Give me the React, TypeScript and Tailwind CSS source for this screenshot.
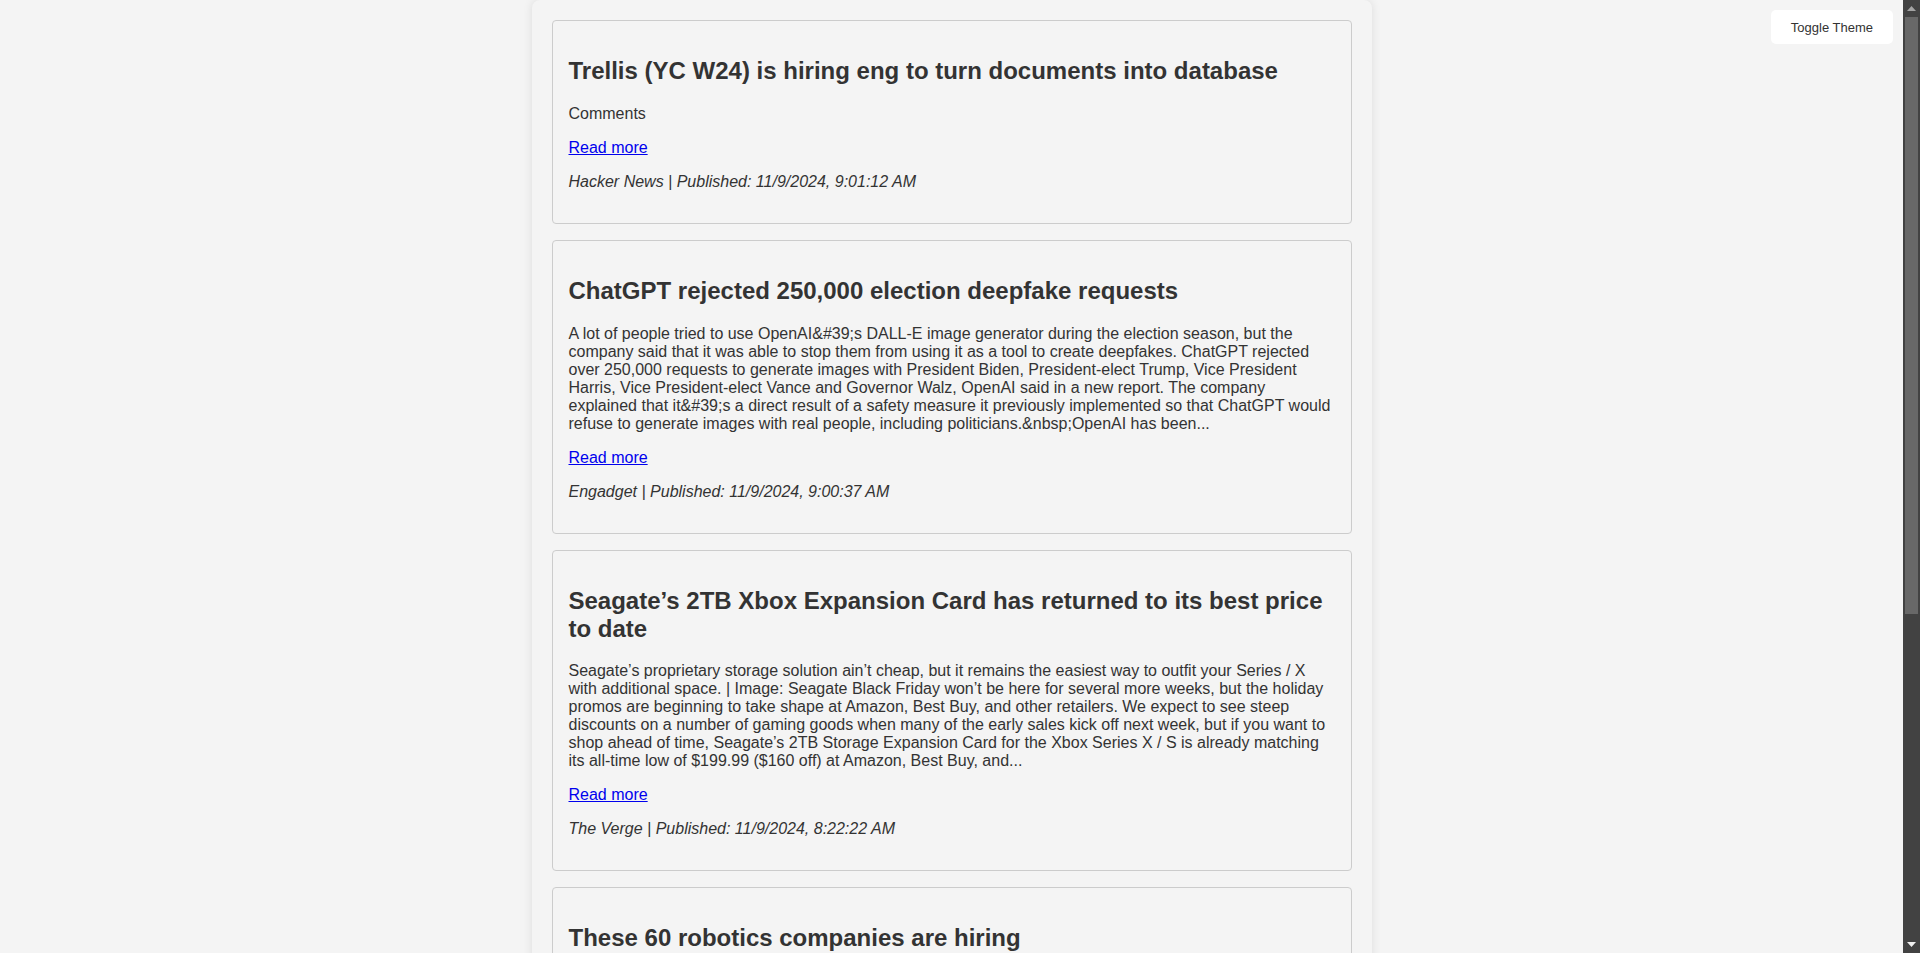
import React from "react";

type Article = {
  title: string;
  description: string;
  source: string;
  published: string;
};

const articles: Article[] = [
  {
    title: "Trellis (YC W24) is hiring eng to turn documents into database",
    description: "Comments",
    source: "Hacker News",
    published: "11/9/2024, 9:01:12 AM",
  },
  {
    title: "ChatGPT rejected 250,000 election deepfake requests",
    description:
      "A lot of people tried to use OpenAI&#39;s DALL-E image generator during the election season, but the company said that it was able to stop them from using it as a tool to create deepfakes. ChatGPT rejected over 250,000 requests to generate images with President Biden, President-elect Trump, Vice President Harris, Vice President-elect Vance and Governor Walz, OpenAI said in a new report. The company explained that it&#39;s a direct result of a safety measure it previously implemented so that ChatGPT would refuse to generate images with real people, including politicians.&nbsp;OpenAI has been...",
    source: "Engadget",
    published: "11/9/2024, 9:00:37 AM",
  },
  {
    title: "Seagate\u2019s 2TB Xbox Expansion Card has returned to its best price to date",
    description:
      "Seagate\u2019s proprietary storage solution ain\u2019t cheap, but it remains the easiest way to outfit your Series / X with additional space. | Image: Seagate Black Friday won\u2019t be here for several more weeks, but the holiday promos are beginning to take shape at Amazon, Best Buy, and other retailers. We expect to see steep discounts on a number of gaming goods when many of the early sales kick off next week, but if you want to shop ahead of time, Seagate\u2019s 2TB Storage Expansion Card for the Xbox Series X / S is already matching its all-time low of $199.99 ($160 off) at Amazon, Best Buy, and...",
    source: "The Verge",
    published: "11/9/2024, 8:22:22 AM",
  },
  {
    title: "These 60 robotics companies are hiring",
    description:
      "Robotics has been one of the few bright spots in an otherwise tough hiring market this year. From warehouse automation to surgical systems and humanoids, a growing number of startups and established players are looking to add engineers and researchers to their teams. We\u2019ve rounded up 60 robotics companies that are actively hiring right now...",
    source: "TechCrunch",
    published: "11/9/2024, 8:00:00 AM",
  },
  {
    title: "The best early Black Friday laptop deals",
    description:
      "Black Friday is still a few weeks away, but retailers have already started discounting a wide range of laptops, from budget Chromebooks to high-end gaming machines. We\u2019ve gathered the best early deals we could find on models from Apple, Dell, HP and Lenovo...",
    source: "Engadget",
    published: "11/9/2024, 7:45:10 AM",
  },
];

function Card({ a }: { a: Article }) {
  return (
    <div className="mb-4 rounded border border-[#ccc] bg-[#f4f4f4] p-4">
      <h2 className="my-[19.92px] text-[24px] font-bold leading-[normal] text-[#333]">
        {a.title}
      </h2>
      <p className="my-4 text-[16px] leading-[18px]">{a.description}</p>
      <p className="my-4 text-[16px] leading-[normal]">
        <a href="#" className="text-[#0000ee] underline">
          Read more
        </a>
      </p>
      <p className="my-4 text-[16px] italic leading-[normal]">
        {a.source} | Published: {a.published}
      </p>
    </div>
  );
}

function Scrollbar() {
  return (
    <div className="flex h-full w-[17px] shrink-0 flex-col bg-[#424242]">
      <div className="flex h-[17px] items-center justify-center">
        <svg width="9" height="5" viewBox="0 0 9 5">
          <polygon points="4.5,0 9,5 0,5" fill="#a3a3a3" />
        </svg>
      </div>
      <div className="flex-1 px-[2px]">
        <div className="h-[597px] bg-[#686868]" />
      </div>
      <div className="flex h-[17px] items-center justify-center">
        <svg width="9" height="5" viewBox="0 0 9 5">
          <polygon points="0,0 9,0 4.5,5" fill="#f0f0f0" />
        </svg>
      </div>
    </div>
  );
}

export default function App() {
  return (
    <div className="flex h-screen bg-[#f4f4f4] font-['Liberation_Sans',Arial,sans-serif] text-[#333]">
      <div className="min-w-0 flex-1 overflow-y-auto [scrollbar-width:none]">
        <button className="fixed right-[27px] top-[10px] h-[34px] rounded-[5px] bg-white px-5 text-[13px] leading-[normal] text-[#333]">
          Toggle Theme
        </button>
        <div className="mx-auto max-w-[840px] rounded-lg bg-[#f4f4f4] p-5 shadow-[0_0_10px_rgba(0,0,0,0.1)]">
          {articles.map((a) => (
            <Card key={a.title} a={a} />
          ))}
        </div>
      </div>
      <Scrollbar />
    </div>
  );
}
